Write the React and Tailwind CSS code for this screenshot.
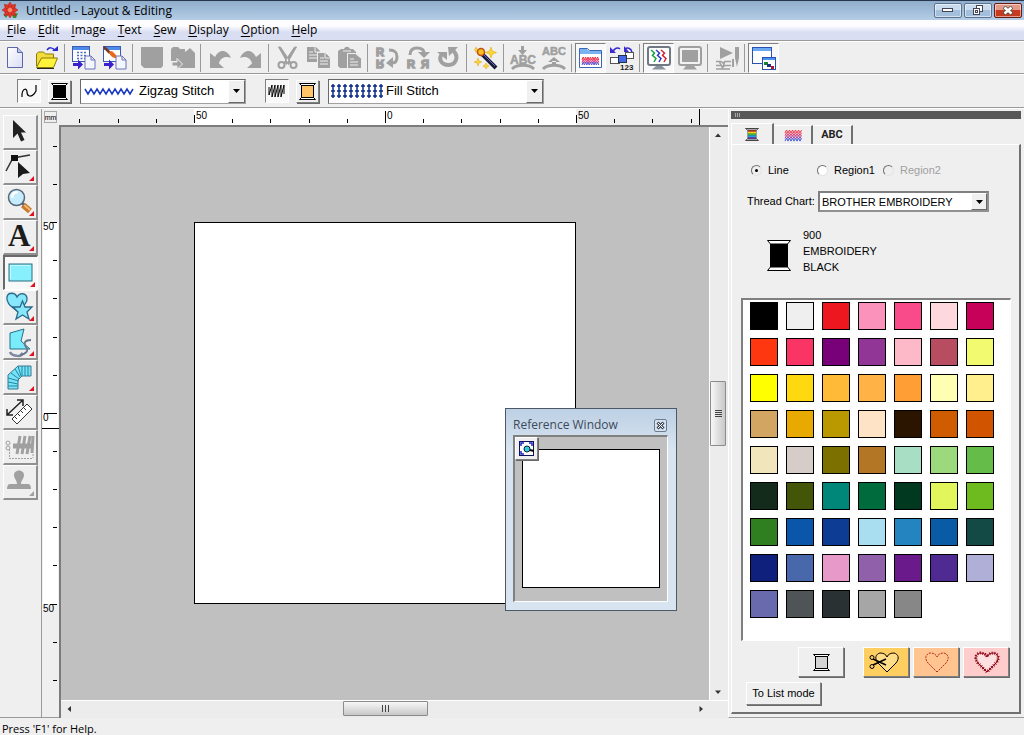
import React from "react";

const UI = "font-['Open_Sans','Noto_Sans',sans-serif]";
const RAISED = "border border-t-white border-l-white border-r-[#808080] border-b-[#808080] shadow-[1px_1px_0_#696969]";
const SUNKEN = "border border-t-[#808080] border-l-[#808080] border-r-white border-b-white";

function Icon({ children, size = 24, className = "" }) {
  return (
    <svg width={size} height={size} viewBox={`0 0 ${size} ${size}`} fill="none" className={`shrink-0 overflow-visible ${className}`} aria-hidden="true">
      {children}
    </svg>
  );
}

const G = "#a0a0a0";

const Page = ({ x = 13, y = 10 }) => (
  <path d={`M${x} ${y}h6l4 4v9h-10z M${x + 6} ${y}v4h4`} fill="#f4f6ff" stroke="#6a74b8" />
);
const BlueArrow = () => <path d="M1 17h5v-3.500l5 5-5 5V20H1z" fill="#3a1fd0" />;

const icons = {
  fresh: (
    <Icon>
      <defs><linearGradient id="pg" x1="0" y1="0" x2="1" y2="1"><stop stopColor="#fff" /><stop offset="1" stopColor="#d9dcf7" /></linearGradient></defs>
      <path d="M3.500 1.500h10l5 5v15h-15z" fill="url(#pg)" stroke="#5c66a8" />
      <path d="M13.500 1.500v5h5" fill="#b9c0ea" stroke="#5c66a8" />
    </Icon>
  ),
  open: (
    <Icon>
      <path d="M1.500 20V8l2-2h5l2 2h8v4" fill="#f3dc3a" stroke="#8a7a10" />
      <path d="M1.500 21.500l5-9.500h16l-4 9.500z" fill="#fff23a" stroke="#8a7a10" />
      <path d="M2 22.500h17" stroke="#222" />
      <path d="M12 4c2-3 6-3 8 1" stroke="#2a2ad0" strokeWidth="1.500" />
      <path d="M17 5h6V0z" fill="#2a2ad0" />
    </Icon>
  ),
  importImage: (
    <Icon>
      <rect x="0.500" y="0.500" width="17" height="15" fill="#fff" stroke="#3a5bb8" />
      <path d="M1 2.500h16" stroke="#4c8be8" strokeWidth="3" />
      {[6, 9, 12].map((y) => <path key={y} d={`M5 ${y}.500h2m1.500 0h2m1.500 0h2`} stroke="#4a6fc0" strokeWidth="1.500" />)}
      <Page /><BlueArrow />
    </Icon>
  ),
  importPaint: (
    <Icon>
      <rect x="0.500" y="0.500" width="17" height="15" fill="#fff" stroke="#3a5bb8" />
      <path d="M1 2.500h16" stroke="#4c8be8" strokeWidth="3" />
      <path d="M1 1l6 6" stroke="#7a3a20" strokeWidth="2.500" />
      <path d="M6 6l3-1 4 4v3c-3 0-6-2-7-6z" fill="#e86a1a" />
      <Page /><BlueArrow />
    </Icon>
  ),
  save: <Icon><path d="M1 1h22v19l-2 2H4l-3-3z" fill={G} /></Icon>,
  saveAs: (
    <Icon>
      <path d="M0 3l2-2h5l2 2h5v12H0z" fill={G} /><path d="M13 7l6-5 5 5v15H13z" fill={G} />
      <path d="M7 9h17v13H7z" fill={G} /><path d="M1 16h5v-3.500l5.500 5.500L6 23.500V20H1z" fill={G} stroke="#efefef" />
    </Icon>
  ),
  undo: <Icon><path d="M2 7v15h14l-5-4.500c1-5 6-8 12-5.500C19 3 11 3 7 11z" fill={G} /></Icon>,
  redo: <Icon><path d="M22 7v15H8l5-4.500c-1-5-6-8-12-5.500C5 3 13 3 17 11z" fill={G} /></Icon>,
  cut: (
    <Icon>
      <path d="M2.500 1l2 0 10 15-2 2.500zM20.500 1l-2 0-10 15 2 2.500z" fill={G} stroke={G} />
      <circle cx="5.500" cy="19" r="3" stroke={G} strokeWidth="2" /><circle cx="17.500" cy="19" r="3" stroke={G} strokeWidth="2" />
    </Icon>
  ),
  copy: (
    <Icon>
      <path d="M0 1h9l4 4v11H0z" fill={G} /><path d="M10.500 6.500h8l5 5v11h-13z" fill={G} stroke="#efefef" />
      <path d="M2 6h4m-4 3h8m-8 3h8M13 12h4m-4 3h8m-8 3h8" stroke="#efefef" /><path d="M8 1v5h5M18 7v5h5" stroke="#efefef" />
    </Icon>
  ),
  paste: (
    <Icon>
      <path d="M0 5l3-2h3c1-3 5-3 6 0h3l3 3v15l-1 1H2l-2-2z" fill={G} /><path d="M5 5h8" stroke="#efefef" />
      <path d="M9.500 7.500h8l6 5v10h-14z" fill={G} stroke="#efefef" /><path d="M12 13h4m-4 3h8m-8 3h8" stroke="#efefef" />
    </Icon>
  ),
  flipV: (
    <Icon>
      <g fill={G} stroke={G} strokeWidth="1.500" fontFamily="Liberation Sans" fontWeight="700" fontSize="11"><text x="1" y="10">R</text><text x="1" y="-14" transform="scale(1 -1)">R</text></g>
      <path d="M14 4c7 0 8 3 8 7s-2 6-5 6" stroke={G} strokeWidth="3" /><path d="M11 17l7-6v11z" fill={G} />
    </Icon>
  ),
  flipH: (
    <Icon>
      <g fill={G} stroke={G} strokeWidth="1.500" fontFamily="Liberation Sans" fontWeight="700" fontSize="11"><text x="1" y="22">R</text><text x="-23" y="22" transform="scale(-1 1)">R</text></g>
      <path d="M4 9c0-5 3-7 7-7s7 1 7 5" stroke={G} strokeWidth="3" /><path d="M12 6h12l-6 6z" fill={G} />
    </Icon>
  ),
  rotate: (
    <Icon>
      <path d="M16.500 5c6 6 2 14-5 14S.500 13 5.500 7" stroke={G} strokeWidth="4" />
      <path d="M0 6h10v8z M11 1h10l-9 9z" fill={G} />
    </Icon>
  ),
  wand: (
    <Icon>
      <g fill="#f8d830" stroke="#e0a010" strokeWidth="0.500">
        <path d="M17 1l1.500 4 4 1.500-4 1.500L17 12l-1.500-4-4-1.500 4-1.500z" /><path d="M4 12l1 3 3 1-3 1-1 3-1-3-3-1 3-1z" />
        <path d="M12 17l1 2 2 1-2 1-1 2-1-2-2-1 2-1zM2 1l.7 2 2 .7-2 .7L2 6.500l-.7-2-1-.7 1-.7z" />
      </g>
      <path d="M8 8l14 14" stroke="#1a1a3a" strokeWidth="4" /><path d="M9 8l12 12" stroke="#6a6ac0" strokeWidth="1" />
      <circle cx="7" cy="6" r="3.500" fill="#f8c020" stroke="#c05010" strokeWidth="1.500" />
    </Icon>
  ),
  fitText: (
    <Icon>
      <path d="M7 4h9l-4.500 5z M10 0h3v5h-3z" fill={G} />
      <text x="-1" y="18" fill={G} stroke={G} strokeWidth="0.500" fontFamily="Liberation Sans" fontWeight="700" fontSize="12">ABC</text>
      <path d="M1 23c5-5 17-5 22 0" stroke={G} strokeWidth="3" />
    </Icon>
  ),
  releaseText: (
    <Icon>
      <text x="0" y="9" fill={G} stroke={G} strokeWidth="0.500" fontFamily="Liberation Sans" fontWeight="700" fontSize="11">ABC</text>
      <path d="M6 16h12l-6-5z M10 15h4v4h-4z" fill={G} /><path d="M1 23c5-5 17-5 22 0" stroke={G} strokeWidth="3" />
    </Icon>
  ),
  attributes: (
    <Icon>
      <path d="M0.500 21.500v-19h8l2 2h12v17z" fill="#fff" stroke="#3a66b8" /><path d="M1 3h7l2 2h12v3H1z" fill="#7ab4f0" />
      {[0, 1, 2].map((i) => <path key={i} d={`M3 ${14 + i * 2.5}l1.200-3 1.200 3 1.200-3 1.200 3 1.200-3 1.200 3 1.200-3 1.200 3 1.200-3 1.200 3 1.200-3 1.200 3 1.200-3 1.200 3`} stroke={["#f03040", "#e03878", "#6050d0"][i]} />)}
    </Icon>
  ),
  order: (
    <Icon>
      <path d="M3 6c1-4 5-5 7-3M22 6c-1-4-5-5-7-3" stroke="#3a2ad0" strokeWidth="1.500" /><path d="M0 1v6h6zM14 0v6h5z" fill="#3a2ad0" />
      <rect x="0.500" y="11.500" width="9" height="6" fill="#fff" stroke="#555" /><rect x="15.500" y="6.500" width="8" height="6" fill="#fff" stroke="#555" />
      <rect x="8.500" y="9.500" width="8" height="7" fill="#4468e8" stroke="#234" />
      <text x="10" y="24" fill="#222" fontFamily="Liberation Sans" fontWeight="700" fontSize="8">123</text>
    </Icon>
  ),
  stitchView: (
    <Icon>
      <rect x="1" y="1" width="22" height="18" rx="2" fill="#fff" stroke="#707884" strokeWidth="2" /><path d="M9 20h6l4 3.500H5z" fill="#8a929e" />
      {[["#18a038", 4], ["#3038c0", 9], ["#d02030", 14]].map(([c, x]) => <path key={c} d={`M${x} 4l3.500 3-2 2.500 3.500 3-2 3.500`} stroke={c} strokeWidth="1.500" />)}
    </Icon>
  ),
  realistic: (
    <Icon>
      <rect x="1" y="1" width="22" height="18" rx="2" fill="#f2f2f2" stroke={G} strokeWidth="2" /><rect x="4" y="4" width="16" height="12" fill={G} /><path d="M8 20h8l3 3.500H5z" fill={G} />
    </Icon>
  ),
  simulate: (
    <Icon>
      <path d="M5 1l13 6-13 6z" fill={G} /><path d="M20 1h4v11l-2 9-2-9z M17 13h2v8h-2z" fill={G} />
      <path d="M1 15.500h5l2 1.500 2-1.500h6M1 19.500h5l2 1.500 2-1.500h6M1 23h14M4 15l4 8M10 15l-3 8" stroke={G} strokeWidth="1.500" />
    </Icon>
  ),
  reference: (
    <Icon>
      <rect x="0.500" y="1.500" width="19" height="16" fill="#fff" stroke="#2a50b0" /><path d="M1 3.500h18" stroke="#6aa8f4" strokeWidth="3" />
      <rect x="10.500" y="11.500" width="13" height="12" fill="#fff" stroke="#2a50b0" /><path d="M11 13h12" stroke="#4a94f0" strokeWidth="2" />
      <path d="M12 16h4v3h-4z" fill="#188030" /><path d="M15 18h4v3h-4z" fill="#203080" /><path d="M19 20h3v3h-3z" fill="#b01830" />
    </Icon>
  ),
};

const toolbar = [
  [["New", "fresh"], ["Open", "open"]],
  [["Open image", "importImage"], ["Image to stitch wizard", "importPaint"]],
  [["Save", "save", "off"], ["Write to card", "saveAs", "off"]],
  [["Undo", "undo", "off"], ["Redo", "redo", "off"]],
  [["Cut", "cut", "off"], ["Copy", "copy", "off"], ["Paste", "paste", "off"]],
  [["Flip vertically", "flipV", "off"], ["Flip horizontally", "flipH", "off"], ["Rotate", "rotate", "off"]],
  [["Auto punch", "wand"]],
  [["Fit text to outline", "fitText", "off"], ["Release text", "releaseText", "off"]],
  [["Sewing attributes", "attributes", "on"], ["Sewing order", "order"]],
  [["Stitch view", "stitchView", "on"], ["Realistic view", "realistic", "off"]],
  [["Stitch simulator", "simulate", "off"]],
  [["Reference window", "reference", "on"]],
];

const tools = [
  ["Select", false, <path key="a" d="M9 4v18l4.500-4.500 3.500 8 3.500-1.500-3.500-7.500h5z" fill="#222" />],
  ["Edit point", true, (
    <g key="b"><path d="M2 20L9 7l17-3" stroke="#333" strokeWidth="1.500" /><rect x="7" y="4" width="7" height="6" fill="#111" /><path d="M14 11v16l5-4 7-1z" fill="#1a1a1a" /></g>
  )],
  ["Zoom", true, (
    <g key="c"><path d="M19 19l7 6" stroke="#c87828" strokeWidth="6" /><path d="M19 18l7 6" stroke="#f0b870" strokeWidth="2" /><path d="M16 15l4 4" stroke="#667" strokeWidth="3" />
      <circle cx="12.500" cy="11.500" r="8" fill="#c4ecfc" stroke="#55667a" strokeWidth="1.500" /><path d="M8 12c0-4 2-6 6-6" stroke="#fff" strokeWidth="2.500" /></g>
  )],
  ["Text", true, <text key="d" x="4" y="25" fill="#1c1c1c" fontFamily="Liberation Serif" fontWeight="700" fontSize="31">A</text>],
  ["Shape", true, <g key="e"><rect x="4" y="7" width="23" height="17" fill="#88f0fc" stroke="#2c6c84" /><path d="M5.500 22V8.500H25" stroke="#c4faff" /></g>],
  ["Outline", true, (
    <g key="f" fill="#86e8fa" stroke="#2a6a8c" strokeWidth="1.300"><path d="M13 20C5 14 2 11 3 6s8-5 10 0c3-5 9-4 10 1s-4 9-10 13z" />
      <path d="M18.500 10l2.500 6h7l-5 5 2 7-6.500-4-6.500 4 2-7-5-5h7z" /></g>
  )],
  ["Manual punch", true, (
    <g key="g"><path d="M17 27c4 4-9 4-11-1" stroke="#8088a0" strokeWidth="2.500" /><path d="M6 7l14-4-3 12 9 8H6z" fill="#78ecfa" stroke="#28708c" /><path d="M27 14c-6 0-8 3-5 7s0 7-6 8" stroke="#68788c" strokeWidth="1.800" /></g>
  )],
  ["Path stitch", true, (
    <g key="h"><path d="M4 28V14L14 5h13v10h-9l-4 4v9z" fill="#76e4f4" stroke="#3a7890" /><path d="M4 25h10M4 21l10 2M4 17l11 3M7 12l8 6M11 8l5 8M14 5l3 10M18 5v10M21 5v10M24 5v10" stroke="#2484a8" /></g>
  )],
  ["Measure", false, (
    <g key="i"><path d="M3 19L19 4M3 13v6h6M13 4h6v6" stroke="#222" strokeWidth="1.500" /><path d="M8 23L23 8l5 5-15 15z" fill="#fff" stroke="#333" /><path d="M11 21l2 2M14 18l2 2M17 15l2 2M20 12l2 2" stroke="#333" /></g>
  )],
  ["Split stitch", false, (
    <g key="j"><path d="M9 15h20" stroke={G} strokeWidth="5" /><path d="M13 23l3-18M18 23l3-18M23 23l3-18M28 22l1-17" stroke={G} strokeWidth="3" /><path d="M5 27.500h24M5.500 18v9M29 23v4" stroke={G} strokeDasharray="2 1" /><circle cx="4" cy="12" r="2" stroke={G} /><circle cx="4" cy="17" r="2" stroke={G} /></g>
  )],
  ["Stamp", true, <g key="k" fill={G}><path d="M10 9c0-6 10-6 10 0 0 4-3 5-3 9h7c2 0 3 2 3 5H3c0-3 1-5 3-5h7c0-4-3-5-3-9z" /></g>],
];

const palette = [
  "#000000", "#efefef", "#ed1720", "#fb92bb", "#f94a8a", "#fdd9dd", "#c70059",
  "#fe3710", "#fa3464", "#780078", "#913697", "#feb9c8", "#b84d62", "#f2fb70",
  "#ffff00", "#ffd910", "#ffba38", "#ffb346", "#ff9e35", "#ffffb3", "#fff08d",
  "#d2a662", "#e8a900", "#b99800", "#ffe3c6", "#2b1500", "#cf5c00", "#d15400",
  "#f0e5bb", "#d7cdc8", "#7c7000", "#b27624", "#a8dec4", "#9cd97d", "#65bc48",
  "#132b1a", "#435607", "#00877a", "#006b3d", "#00391f", "#e2f55a", "#6dbb1e",
  "#2f7e20", "#0b56a8", "#0d3c94", "#a8def0", "#2384bf", "#095ba6", "#134a46",
  "#0e1f7c", "#4968ac", "#e799ca", "#9160ab", "#6a1a8a", "#4f2a92", "#afafd8",
  "#686aad", "#4f5556", "#293133", "#a6a6a6", "#878787",
];

function Spool({ fill }) {
  return (
    <svg width="24" height="31" viewBox="0 0 24 31" fill="none" aria-hidden="true" className="mb-1 shrink-0">
      <path d="M0.500 0.500h23l-3 3.500h-17zM0.500 30.500h23l-3-3.500h-17z" fill="#fff" stroke="#000" />
      <rect x="3" y="4" width="18" height="23" fill={fill} />
    </svg>
  );
}

function SmallSpool({ fill }) {
  return (
    <svg width="17" height="17" viewBox="0 0 17 17" fill="none" aria-hidden="true" className="shrink-0">
      <path d="M0.500 0.500h16l-2 2h-12zM0.500 16.500h16l-2-2h-12z" fill="#fff" stroke="#000" />
      <rect x="2.500" y="2.500" width="12" height="12" fill={fill} stroke="#000" />
    </svg>
  );
}

function DropMark({ wide }) {
  return (
    <span aria-hidden="true" className={`pointer-events-none flex shrink-0 items-center justify-center self-stretch border border-t-white border-l-white border-r-[#696969] border-b-[#696969] bg-[#f0f0f0] ${wide ? "w-[17px]" : "w-[16px]"}`}>
      <svg width="7" height="4" viewBox="0 0 7 4"><path d="M0 0h7L3.500 4z" fill="#000" /></svg>
    </span>
  );
}

function StitchSelect({ label, value, className, children }) {
  return (
    <label className={`flex h-[25px] items-center border border-t-[#696969] border-l-[#696969] border-r-[#a0a0a0] border-b-[#a0a0a0] bg-white pl-px ${className}`}>
      {children}
      <select aria-label={label} className="min-w-0 flex-1 appearance-none bg-transparent text-[13px] leading-4 outline-none">
        <option>{value}</option>
      </select>
      <DropMark wide />
    </label>
  );
}

function HRuler() {
  const minor = [79, 118, 156, 232, 270, 309, 347, 423, 461, 500, 538, 614, 652, 691];
  const major = [[194, "50"], [385, "0"], [576, "50"]];
  return (
    <svg width="669" height="16" viewBox="59 109 669 16" className="block" aria-label="Horizontal ruler" shapeRendering="crispEdges">
      <rect x="194" y="109" width="382" height="16" fill="#fff" />
      {minor.map((x) => <rect key={x} x={x} y="119" width="1" height="4" fill="#000" />)}
      {major.map(([x, t]) => (
        <g key={x}><rect x={x} y={t === "0" ? 111 : 115} width="1" height={t === "0" ? 12 : 8} fill="#000" />
          <text x={x + 2} y="119" fontSize="10" fontFamily="Liberation Sans">{t}</text></g>
      ))}
      <rect x="699" y="109" width="1" height="16" fill="#000" />
    </svg>
  );
}

function VRuler() {
  const minor = [146, 184, 260, 298, 337, 375, 451, 489, 527, 565, 642, 680];
  const major = [[222, "50"], [413, "0"], [604, "50"]];
  return (
    <svg width="17" height="590" viewBox="42 125 17 590" className="block" aria-label="Vertical ruler" shapeRendering="crispEdges">
      <rect x="43" y="222" width="15" height="382" fill="#fff" />
      {minor.map((y) => <rect key={y} x="53" y={y} width="4" height="1" fill="#000" />)}
      {major.map(([y, t]) => (
        <g key={y}><rect x={t === "0" ? 44 : 50} y={y} width={t === "0" ? 13 : 7} height="1" fill="#000" />
          <text x="43" y={y + 8} fontSize="10" fontFamily="Liberation Sans">{t}</text></g>
      ))}
      <rect x="42" y="428" width="17" height="1" fill="#000" />
    </svg>
  );
}

function Arrow({ d }) {
  return <svg width="8" height="8" viewBox="0 0 8 8" aria-hidden="true"><path d={d} fill="#333" /></svg>;
}

function CaptionButton({ label, tone, children }) {
  return (
    <button type="button" aria-label={label} className={`flex h-[15px] w-7 items-center justify-center rounded-[2px] border shadow-[inset_0_0_0_1px_rgba(255,255,255,0.5)] ${tone}`}>
      {children}
    </button>
  );
}

const blueTone = "border-[#5a7390] bg-linear-to-b from-[#c9dcef] from-50% to-[#a3bfdc] to-50%";
const heart = "M23 24l-9-9c-4-5-2-9 2-10 3 0 6 1 7 4 1-3 4-4 7-4 4 1 6 5 2 10z";

export default function App() {
  return (
    <div className="flex min-h-screen flex-col overflow-hidden bg-[#efefef] font-['Liberation_Sans',Arial,sans-serif] text-[11px] text-black">
      <header className={`flex h-5 items-center border-t border-[#26364c] bg-linear-to-b from-[#8fadcc] to-[#b5cde6] px-[2px] ${UI}`}>
        <svg width="17" height="17" viewBox="0 0 17 17" aria-hidden="true">
          <path d="M10 12l6-1-2 5-3 0zM1 12l5 1-2 3z" fill="#3c8a30" />
          <g fill="#e83424" stroke="#a82018" strokeWidth="0.500">
            {[0, 45, 90, 135, 180, 225, 270, 315].map((a) => <path key={a} d="M8 8L6 3 8 0l2 3z" transform={`rotate(${a} 8 8)`} />)}
          </g>
          <circle cx="8" cy="8" r="2.500" fill="#f89070" stroke="#c83020" strokeWidth="0.500" />
        </svg>
        <h1 className="ml-[7px] flex-1 text-[12px] leading-4">Untitled - Layout &amp; Editing</h1>
        <div className="flex gap-[2px]">
          <CaptionButton label="Minimize" tone={blueTone}><svg width="12" height="5"><rect x="0.500" y="0.500" width="10" height="3" fill="#fff" stroke="#445" /></svg></CaptionButton>
          <CaptionButton label="Restore" tone={blueTone}>
            <svg width="12" height="11" fill="#fff" stroke="#445"><rect x="4.500" y="0.500" width="6" height="6" /><rect x="1.500" y="3.500" width="6" height="6" /><rect x="3.500" y="5.500" width="2" height="2" /></svg>
          </CaptionButton>
          <CaptionButton label="Close" tone="border-[#6a1c14] bg-linear-to-b from-[#e39a88] from-50% to-[#c63a20] to-50%">
            <svg width="12" height="9" fill="none"><path d="M2 1l8 7M10 1L2 8" stroke="#554" strokeWidth="4" /><path d="M2.500 1.500l7 6M9.500 1.500l-7 6" stroke="#fff" strokeWidth="2.500" /></svg>
          </CaptionButton>
        </div>
      </header>

      <nav className={`flex h-[21px] items-center gap-3 border-b border-[#9a9a9a] bg-linear-to-b from-[#fdfdff] from-30% to-[#d9def2] to-60% px-[7px] text-[12px] leading-4 ${UI}`}>
        {["File", "Edit", "Image", "Text", "Sew", "Display", "Option", "Help"].map((m) => (
          <button key={m} type="button"><span className="underline underline-offset-2">{m[0]}</span>{m.slice(1)}</button>
        ))}
      </nav>

      <div className="flex h-[33px] items-center border-t border-b border-t-white border-b-[#9a9a9a]" role="toolbar" aria-label="Main">
        {toolbar.map((group, g) => (
          <React.Fragment key={g}>
            {g > 0 && <span className="flex h-7 w-[6px] shrink-0 pl-[2px]"><span className="w-px bg-[#9a9a9a]" /></span>}
            {group.map(([name, icon, state]) => (
              <button key={name} type="button" aria-label={name} disabled={state === "off"} className={`flex h-[30px] w-[31px] shrink-0 items-center justify-center ${state === "on" ? "border border-t-[#808080] border-l-[#808080] border-r-white border-b-white bg-[#f8f8f8]" : ""}`}>
                {icons[icon]}
              </button>
            ))}
          </React.Fragment>
        ))}
      </div>

      <div className="flex h-[34px] items-center border-t border-b border-t-white border-b-[#9a9a9a] pl-[17px]" role="toolbar" aria-label="Sewing">
        <button type="button" aria-label="Line sew" className={`flex h-6 w-6 items-center justify-center bg-[#f8f8f8] ${SUNKEN}`}>
          <svg width="18" height="18" viewBox="0 0 18 18" fill="none"><path d="M2 15v-3c1-6 5-6 5-2 0 5 4 5 7 2l2-3V3" stroke="#000" strokeWidth="1.200" /></svg>
        </button>
        <button type="button" aria-label="Line color" className={`ml-[7px] flex h-[23px] w-[23px] items-center justify-center ${RAISED}`}><SmallSpool fill="#000" /></button>
        <StitchSelect label="Line sew type" value="Zigzag Stitch" className="ml-[9px] w-[166px]">
          <svg width="57" height="10" viewBox="0 0 57 10" fill="none" aria-hidden="true">
            <path d="M3 3l3 5 3-5 3 5 3-5 3 5 3-5 3 5 3-5 3 5 3-5 3 5 3-5 3 5 3-5 3 5 3-5" stroke="#1838c0" strokeWidth="1.500" />
          </svg>
        </StitchSelect>
        <button type="button" aria-label="Region sew" className={`ml-[19px] flex h-6 w-6 items-center justify-center bg-[#f8f8f8] ${SUNKEN}`}>
          <svg width="18" height="14" viewBox="0 0 18 14" fill="none"><path d="M1 3v8l3-10v12l3-12v12l3-12v12l3-12v12l3-12v9" stroke="#000" /></svg>
        </button>
        <button type="button" aria-label="Region color" className={`ml-[7px] flex h-[23px] w-[23px] items-center justify-center ${RAISED}`}><SmallSpool fill="#ffc468" /></button>
        <StitchSelect label="Region sew type" value="Fill Stitch" className="ml-[9px] w-[216px]">
          <svg width="56" height="16" viewBox="0 0 56 16" fill="none" aria-hidden="true">
            {[2, 8, 14, 20, 26, 32, 38, 44, 50].map((x) => <path key={x} d={`M${x + 1} 1v14M${x - 1} 3h4M${x - 1} 8h4M${x - 1} 13h4`} stroke="#0c2c88" strokeWidth="1.500" />)}
          </svg>
        </StitchSelect>
      </div>

      <main className="flex flex-1 border-t border-white">
        <aside aria-label="Tools" className="flex w-[42px] shrink-0 flex-col border-r border-b border-[#9a9a9a] pt-[6px] pl-[3px]">
          {tools.map(([name, more, art]) => (
            <button key={name} type="button" aria-label={name} disabled={name === "Stamp" || name === "Split stitch"} className={`h-[35px] w-[35px] ${name === "Shape" ? "border-t-2 border-r border-b border-l-2 border-t-[#696969] border-l-[#696969] border-r-white border-b-white bg-[#f8f8f8]" : "border-t border-r-2 border-b-2 border-l border-t-white border-l-white border-r-[#909090] border-b-[#909090]"}`}>
              <svg width="32" height="32" viewBox="0 0 32 32" fill="none" className="overflow-visible" aria-hidden="true">
                {art}
                {more && <path d="M30 25v5h-5z" fill={name === "Stamp" ? G : "#e01020"} />}
              </svg>
            </button>
          ))}
        </aside>

        <section aria-label="Design page" className="flex min-w-0 flex-1 flex-col">
          <div className="flex h-4 overflow-hidden">
            <span className="flex w-[17px] shrink-0 items-center justify-center">
              <span className="flex h-3 w-[13px] items-center justify-center border border-[#a8a8a8] text-[7px] leading-none">mm</span>
            </span>
            <HRuler />
          </div>
          <div className="flex flex-1">
            <div className="relative w-[17px] shrink-0 overflow-hidden border-b border-[#9a9a9a]"><div className="absolute inset-0"><VRuler /></div></div>
            <div className="flex min-w-0 flex-1 flex-col border-t-2 border-l-2 border-[#7c7c7c]">
              <div className="flex flex-1">
                <div className="relative min-w-0 flex-1 overflow-hidden bg-[#c0c0c0]">
                  <div className="absolute top-[95px] left-[133px] size-[382px] border border-black bg-white" />
                </div>
                <div className="flex w-[19px] shrink-0 flex-col items-center border-l border-white bg-[#ececec] pr-[2px]">
                  <button type="button" aria-label="Scroll up" className="flex h-4 items-center"><Arrow d="M1 6h6L4 2.500z" /></button>
                  <div className="flex w-full flex-1 flex-col justify-center">
                    <button type="button" aria-label="Vertical position" className="flex h-[65px] flex-col items-center justify-center gap-px rounded-[1px] border border-[#8c8c8c] bg-linear-to-r from-[#f8f8f8] to-[#c8c8c8]">
                      {[0, 1, 2, 3].map((i) => <span key={i} className="h-px w-[7px] bg-[#444]" />)}
                    </button>
                  </div>
                  <button type="button" aria-label="Scroll down" className="flex h-4 items-center"><Arrow d="M1 2.500h6L4 6z" /></button>
                </div>
              </div>
              <div className="flex h-[18px] items-center border-t border-white bg-[#ececec] pb-[2px]">
                <button type="button" aria-label="Scroll left" className="flex w-4 justify-center"><Arrow d="M6 1v6L2.500 4z" /></button>
                <div className="flex flex-1 justify-center">
                  <button type="button" aria-label="Horizontal position" className="flex h-[15px] w-[85px] items-center justify-center gap-[2px] rounded-[1px] border border-[#8c8c8c] bg-linear-to-b from-[#f8f8f8] to-[#c8c8c8]">
                    {[0, 1, 2].map((i) => <span key={i} className="h-[7px] w-px bg-[#444]" />)}
                  </button>
                </div>
                <button type="button" aria-label="Scroll right" className="flex w-4 justify-center"><Arrow d="M2.500 1v6L6 4z" /></button>
                <span className="w-[19px] shrink-0" />
              </div>
            </div>
          </div>
        </section>

        <aside aria-label="Sewing attributes" className="flex w-[296px] shrink-0 flex-col border-b border-l border-b-[#9a9a9a] border-l-white pt-[2px] pr-[3px] pb-[3px] pl-[2px]">
          <div className="flex h-2 items-center gap-px bg-[#585858] pl-1">
            {[0, 1, 2].map((i) => <span key={i} className="h-1 w-px bg-[#a8a8a8]" />)}
          </div>
          <div role="tablist" className="mt-1 flex h-[21px]">
            <button type="button" role="tab" aria-selected="true" aria-label="Color" className="flex w-[43px] items-center justify-center border-t border-l border-r-2 border-t-white border-l-white border-r-[#707070]">
              <svg width="14" height="13" viewBox="0 0 14 13" aria-hidden="true">
                <rect x="2.500" y="2" width="9" height="9" fill="#444" />
                {["#e03020", "#f0d820", "#38b838", "#28a0e0", "#6838c0"].map((c, i) => <rect key={c} x="3" y={2 + i * 1.8} width="8" height="1.800" fill={c} />)}
                <path d="M0.500 0.500h13l-2 1.500h-9zM0.500 12.500h13l-2-1.500h-9z" fill="#fff" stroke="#444" />
              </svg>
            </button>
            <button type="button" role="tab" aria-selected="false" aria-label="Sewing" className="mt-[2px] flex w-[39px] items-center justify-center border-t border-r-2 border-t-white border-r-[#707070]">
              <svg width="18" height="13" viewBox="0 0 18 13" fill="none" aria-hidden="true">
                {["#f03848", "#e83868", "#b04098", "#4058d8"].map((c, i) => <path key={c} d={`M1 ${4 + i * 2.7}l1.500-3 1.500 3 1.500-3 1.500 3 1.500-3 1.500 3 1.500-3 1.500 3 1.500-3 1.500 3 1.500-3`} stroke={c} />)}
              </svg>
            </button>
            <button type="button" role="tab" aria-selected="false" className="mt-[2px] flex w-10 items-center justify-center border-t border-r-2 border-t-white border-r-[#707070] font-['Liberation_Sans_Narrow','Roboto',sans-serif] text-[11px] font-bold text-[#222]">ABC</button>
          </div>
          <div role="tabpanel" className="flex flex-1 flex-col border-t border-r-2 border-b-2 border-l border-t-white border-r-[#707070] border-b-[#707070] border-l-white pr-[8px] pb-[7px] pl-[9px]">
            <div className="mt-[17px] flex h-4 items-center pl-[10px] leading-4">
              {[["Line", "w-[66px]"], ["Region1", "w-[66px]"], ["Region2", ""]].map(([name, w], i) => (
                <label key={name} className={`flex items-center gap-[6px] ${w} ${i === 2 ? "text-[#a0a0a0]" : ""}`}>
                  <input type="radio" name="part" defaultChecked={i === 0} disabled={i === 2} className="size-[11px] shrink-0 appearance-none rounded-full border border-t-[#707070] border-r-[#e4e4e4] border-b-[#e4e4e4] border-l-[#707070] bg-white p-[3px] checked:bg-black checked:bg-clip-content checked:shadow-none disabled:bg-[#efefef]" />
                  {name}
                </label>
              ))}
            </div>
            <div className="mt-[13px] flex h-[21px] items-center pl-[6px]">
              <label htmlFor="chart" className="w-[71px]">Thread Chart:</label>
              <div className="flex h-[21px] w-[171px] items-center border-2 border-t-[#808080] border-l-[#808080] border-r-[#909090] border-b-[#909090] bg-white">
                <select id="chart" className="min-w-0 flex-1 appearance-none bg-transparent pl-[2px] text-[11px] leading-4 outline-none"><option>BROTHER EMBROIDERY</option></select>
                <DropMark />
              </div>
            </div>
            <div className="mt-[15px] flex items-end pl-[26px]">
              <Spool fill="#000" />
              <p className="ml-[12px] leading-4">900<br />EMBROIDERY<br />BLACK</p>
            </div>
            <div className="mt-[23px] flex-1 border-t-2 border-l-2 border-r border-b border-t-[#808080] border-l-[#808080] border-r-white border-b-white bg-white pt-[2px] pl-[7px]">
              <div className="flex flex-wrap gap-2">
                {palette.map((c) => <button key={c} type="button" aria-label={`Thread ${c}`} className="size-7 border border-black" style={{ backgroundColor: c }} />)}
              </div>
            </div>
            <div className="mt-[6px] flex justify-end gap-1 pr-[2px]">
              <button type="button" aria-label="No thread" className={`mr-[15px] flex h-[30px] w-[46px] items-center justify-center ${RAISED}`}><SmallSpool fill="#d4d4d4" /></button>
              <button type="button" aria-label="Appliqué cut" className={`h-[30px] w-[46px] bg-[#ffce60] ${RAISED}`}>
                <svg width="44" height="28" viewBox="0 0 44 28" fill="none"><path d={heart} stroke="#000" fill="#ffdc88" /><path d="M9 11l13 6M9 17l13-6" stroke="#000" strokeWidth="1.500" /><circle cx="8" cy="9.500" r="2" stroke="#000" /><circle cx="8" cy="18.500" r="2" stroke="#000" /></svg>
              </button>
              <button type="button" aria-label="Appliqué position" className={`h-[30px] w-[46px] bg-[#ffc490] ${RAISED}`}>
                <svg width="44" height="28" viewBox="0 0 44 28" fill="none"><path d={heart} stroke="#b02818" strokeDasharray="2 1" /></svg>
              </button>
              <button type="button" aria-label="Appliqué stitch" className={`h-[30px] w-[46px] bg-[#ffcccc] ${RAISED}`}>
                <svg width="44" height="28" viewBox="0 0 44 28" fill="none"><path d={heart} stroke="#900818" fill="#ffe0e0" /><path d={heart} stroke="#900818" strokeWidth="3" strokeDasharray="1 1.500" /></svg>
              </button>
            </div>
            <button type="button" className={`mt-[5px] ml-[5px] h-[23px] w-[75px] self-start text-[11px] ${RAISED}`}>To List mode</button>
          </div>
        </aside>
      </main>

      <footer className={`h-[17px] shrink-0 overflow-hidden px-[2px] pt-[3px] text-[11px] leading-4 ${UI}`}>Press 'F1' for Help.</footer>

      <section aria-label="Reference Window" className="absolute top-[408px] left-[505px] flex h-[203px] w-[172px] flex-col border border-[#4c5a68] bg-linear-to-b from-[#bdd0e4] to-[#d8e4f0] to-20% pt-[6px] pr-[8px] pb-[8px] pl-[7px]">
        <div className="flex h-5 items-center justify-between pr-px">
          <h2 className={`text-[12px] leading-4 text-[#3c4a5c] ${UI}`}>Reference Window</h2>
          <button type="button" aria-label="Close reference window" className="flex size-[13px] items-center justify-center rounded-[2px] border border-[#6c7c90] bg-[#d8e2ee]">
            <svg width="9" height="9" fill="none"><path d="M1.500 1.500l6 6M7.500 1.500l-6 6" stroke="#3c4858" strokeWidth="3" /><path d="M2 2l5 5M7 2L2 7" stroke="#fff" strokeWidth="1" /></svg>
          </button>
        </div>
        <div className="relative flex-1 border-t-2 border-l-2 border-r border-b border-t-[#808080] border-l-[#808080] border-r-white border-b-white bg-[#c0c0c0] px-[7px] pt-[12px] pb-[13px]">
          <div className="h-full border border-black bg-white" />
          <button type="button" aria-label="Fit view" className={`absolute top-0 left-0 flex size-[23px] items-center justify-center bg-[#efefef] ${RAISED}`}>
            <svg width="15" height="15" fill="none"><rect x="0.500" y="0.500" width="14" height="14" fill="#fff" stroke="#101060" /><path d="M2 5V2h3M10 2h3v3M2 10v3h3" stroke="#1828c0" strokeWidth="1.500" /><circle cx="8" cy="8" r="3" fill="#30d0e0" stroke="#123" /><path d="M11 9l4 1" stroke="#000" strokeWidth="2" /></svg>
          </button>
        </div>
      </section>
    </div>
  );
}
